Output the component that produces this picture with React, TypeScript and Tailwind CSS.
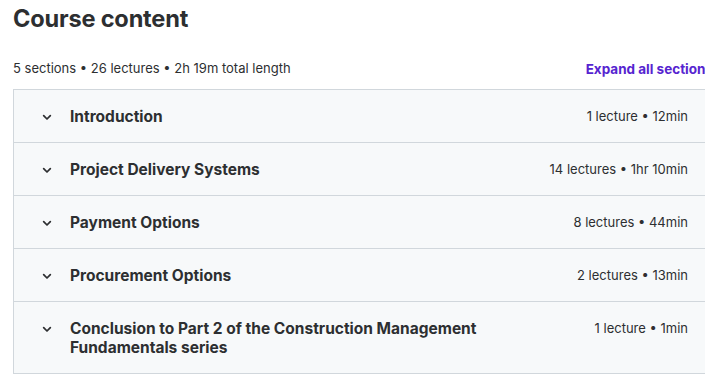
import React from "react";

const sections = [
  { title: "Introduction", meta: "1 lecture • 12min" },
  { title: "Project Delivery Systems", meta: "14 lectures • 1hr 10min" },
  { title: "Payment Options", meta: "8 lectures • 44min" },
  { title: "Procurement Options", meta: "2 lectures • 13min" },
  {
    title: "Conclusion to Part 2 of the Construction Management Fundamentals series",
    meta: "1 lecture • 1min",
  },
];

function Chevron() {
  return (
    <svg width="16" height="16" viewBox="0 0 24 24" fill="none" stroke="#2d2f31" strokeWidth="2.6" strokeLinecap="round" strokeLinejoin="round">
      <path d="M7 10l5 5 5-5" />
    </svg>
  );
}

export default function App() {
  return (
    <div className="bg-white w-[705px] h-[374px] overflow-hidden pl-[13px] text-[#2d2f31]" style={{ fontFamily: "Inter, 'Noto Sans', sans-serif" }}>
      <div className="w-[700px]">
        <h2 className="text-[23.6px] font-bold leading-[36px] pt-[1px] tracking-[-0.2px]">Course content</h2>
        <div className="flex items-center justify-between mt-[22px] mb-[10px] h-[20px]">
          <span className="text-[13px] text-[#2d2f31]">5 sections • 26 lectures • 2h 19m total length</span>
          <span className="text-[13.5px] font-bold text-[#5624d0] whitespace-nowrap">Expand all sections</span>
        </div>
        <div className="border border-[#d1d7dc] border-b-0">
          {sections.map((s) => (
            <div key={s.title} className="flex items-start bg-[#f7f9fa] border-b border-[#d1d7dc] pl-[25px] pr-[24px] pt-[17px] pb-[16px]">
              <div className="w-[31px] h-[19px] flex items-center shrink-0">
                <Chevron />
              </div>
              <div className="flex-1 text-[15.5px] font-bold leading-[19px] pr-[60px]">{s.title}</div>
              <div className="text-[13px] leading-[19px] whitespace-nowrap text-[#2d2f31]">{s.meta}</div>
            </div>
          ))}
        </div>
      </div>
    </div>
  );
}
